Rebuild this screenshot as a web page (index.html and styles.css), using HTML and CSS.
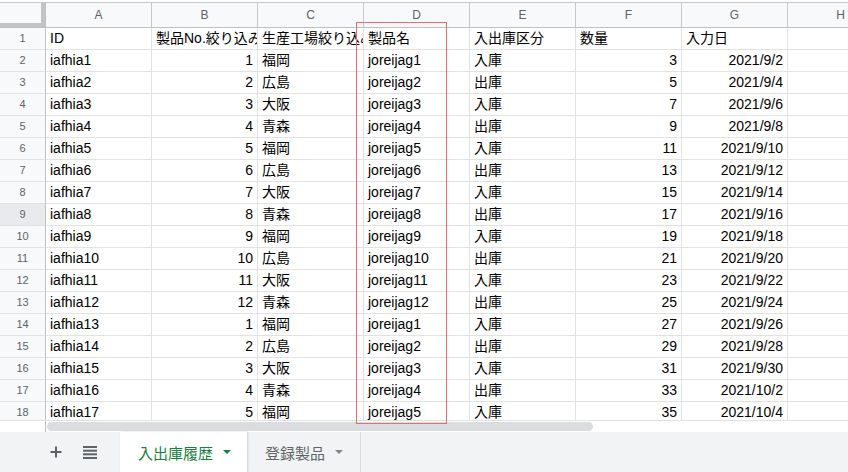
FILE: index.html
```html
<!DOCTYPE html>
<html lang="ja">
<head>
<meta charset="utf-8">
<title>入出庫履歴</title>
<link rel="stylesheet" href="styles.css">
</head>
<body>
<div class="app">
  <div class="sheet">
    <div class="topstrip"></div>
    <div class="colhead">
      <div class="corner"></div>
      <div class="ch">A</div><div class="ch">B</div><div class="ch">C</div><div class="ch">D</div>
      <div class="ch">E</div><div class="ch">F</div><div class="ch">G</div><div class="ch">H</div>
    </div>
    <div class="row"><div class="rh">1</div><div class="c">ID</div><div class="c">製品No.絞り込み</div><div class="c">生産工場絞り込み</div><div class="c">製品名</div><div class="c">入出庫区分</div><div class="c">数量</div><div class="c">入力日</div><div class="c"></div></div>
    <div class="row"><div class="rh">2</div><div class="c">iafhia1</div><div class="c n">1</div><div class="c">福岡</div><div class="c">joreijag1</div><div class="c">入庫</div><div class="c n">3</div><div class="c n">2021/9/2</div><div class="c"></div></div>
    <div class="row"><div class="rh">3</div><div class="c">iafhia2</div><div class="c n">2</div><div class="c">広島</div><div class="c">joreijag2</div><div class="c">出庫</div><div class="c n">5</div><div class="c n">2021/9/4</div><div class="c"></div></div>
    <div class="row"><div class="rh">4</div><div class="c">iafhia3</div><div class="c n">3</div><div class="c">大阪</div><div class="c">joreijag3</div><div class="c">入庫</div><div class="c n">7</div><div class="c n">2021/9/6</div><div class="c"></div></div>
    <div class="row"><div class="rh">5</div><div class="c">iafhia4</div><div class="c n">4</div><div class="c">青森</div><div class="c">joreijag4</div><div class="c">出庫</div><div class="c n">9</div><div class="c n">2021/9/8</div><div class="c"></div></div>
    <div class="row"><div class="rh">6</div><div class="c">iafhia5</div><div class="c n">5</div><div class="c">福岡</div><div class="c">joreijag5</div><div class="c">入庫</div><div class="c n">11</div><div class="c n">2021/9/10</div><div class="c"></div></div>
    <div class="row"><div class="rh">7</div><div class="c">iafhia6</div><div class="c n">6</div><div class="c">広島</div><div class="c">joreijag6</div><div class="c">出庫</div><div class="c n">13</div><div class="c n">2021/9/12</div><div class="c"></div></div>
    <div class="row"><div class="rh">8</div><div class="c">iafhia7</div><div class="c n">7</div><div class="c">大阪</div><div class="c">joreijag7</div><div class="c">入庫</div><div class="c n">15</div><div class="c n">2021/9/14</div><div class="c"></div></div>
    <div class="row"><div class="rh hover">9</div><div class="c">iafhia8</div><div class="c n">8</div><div class="c">青森</div><div class="c">joreijag8</div><div class="c">出庫</div><div class="c n">17</div><div class="c n">2021/9/16</div><div class="c"></div></div>
    <div class="row"><div class="rh">10</div><div class="c">iafhia9</div><div class="c n">9</div><div class="c">福岡</div><div class="c">joreijag9</div><div class="c">入庫</div><div class="c n">19</div><div class="c n">2021/9/18</div><div class="c"></div></div>
    <div class="row"><div class="rh">11</div><div class="c">iafhia10</div><div class="c n">10</div><div class="c">広島</div><div class="c">joreijag10</div><div class="c">出庫</div><div class="c n">21</div><div class="c n">2021/9/20</div><div class="c"></div></div>
    <div class="row"><div class="rh">12</div><div class="c">iafhia11</div><div class="c n">11</div><div class="c">大阪</div><div class="c">joreijag11</div><div class="c">入庫</div><div class="c n">23</div><div class="c n">2021/9/22</div><div class="c"></div></div>
    <div class="row"><div class="rh">13</div><div class="c">iafhia12</div><div class="c n">12</div><div class="c">青森</div><div class="c">joreijag12</div><div class="c">出庫</div><div class="c n">25</div><div class="c n">2021/9/24</div><div class="c"></div></div>
    <div class="row"><div class="rh">14</div><div class="c">iafhia13</div><div class="c n">1</div><div class="c">福岡</div><div class="c">joreijag1</div><div class="c">入庫</div><div class="c n">27</div><div class="c n">2021/9/26</div><div class="c"></div></div>
    <div class="row"><div class="rh">15</div><div class="c">iafhia14</div><div class="c n">2</div><div class="c">広島</div><div class="c">joreijag2</div><div class="c">出庫</div><div class="c n">29</div><div class="c n">2021/9/28</div><div class="c"></div></div>
    <div class="row"><div class="rh">16</div><div class="c">iafhia15</div><div class="c n">3</div><div class="c">大阪</div><div class="c">joreijag3</div><div class="c">入庫</div><div class="c n">31</div><div class="c n">2021/9/30</div><div class="c"></div></div>
    <div class="row"><div class="rh">17</div><div class="c">iafhia16</div><div class="c n">4</div><div class="c">青森</div><div class="c">joreijag4</div><div class="c">出庫</div><div class="c n">33</div><div class="c n">2021/10/2</div><div class="c"></div></div>
    <div class="row"><div class="rh">18</div><div class="c">iafhia17</div><div class="c n">5</div><div class="c">福岡</div><div class="c">joreijag5</div><div class="c">入庫</div><div class="c n">35</div><div class="c n">2021/10/4</div><div class="c"></div></div>
  </div>
  <div class="scroll">
    <div class="scroll-gutter"></div>
    <div class="thumb"></div>
  </div>
  <div class="tabs">
    <div class="tools">
      <svg class="plus" width="12" height="12" viewBox="0 0 12 12"><path d="M6 0.5v11M0.5 6h11" stroke="#5f6368" stroke-width="2" fill="none"/></svg>
      <svg class="menu" width="14" height="13" viewBox="0 0 14 13"><rect x="0" y="0" width="14" height="2" fill="#5f6368"/><rect x="0" y="3.7" width="14" height="2" fill="#5f6368"/><rect x="0" y="7.3" width="14" height="2" fill="#5f6368"/><rect x="0" y="11" width="14" height="2" fill="#5f6368"/></svg>
    </div>
    <div class="tab active"><span class="tab-label">入出庫履歴</span><span class="caret"></span></div>
    <div class="tab"><span class="tab-label">登録製品</span><span class="caret"></span></div>
  </div>
  <div class="selection"></div>
</div>
</body>
</html>
```

FILE: styles.css
```css
html, body {
  margin: 0;
  padding: 0;
  background: #ffffff;
}

.app {
  position: relative;
  width: 848px;
  height: 472px;
  overflow: hidden;
  font-family: "Liberation Sans", Arial, "Noto Sans CJK JP", sans-serif;
  color: #000000;
}

.sheet {
  height: 420px;
  overflow: hidden;
}

.topstrip {
  height: 2px;
  background: #ffffff;
}

.colhead {
  display: flex;
  height: 26px;
  box-sizing: border-box;
  border-top: 1px solid #c7c7c7;
  border-bottom: 1px solid #c0c0c0;
  white-space: nowrap;
}

.corner {
  flex: 0 0 46px;
  box-sizing: border-box;
  background: #f8f9fa;
  border-right: 1px solid #c0c0c0;
  box-shadow: inset -4px -4px 0 #c4c4c4;
}

.ch {
  flex: 0 0 106px;
  box-sizing: border-box;
  background: #f8f9fa;
  border-right: 1px solid #c7c7c7;
  text-align: center;
  font-size: 12px;
  line-height: 24px;
  color: #5f6368;
}

.row {
  display: flex;
  height: 22px;
  white-space: nowrap;
}

.rh {
  flex: 0 0 46px;
  box-sizing: border-box;
  background: #f8f9fa;
  border-right: 1px solid #c0c0c0;
  border-bottom: 1px solid #e2e2e2;
  text-align: center;
  font-size: 11px;
  line-height: 21px;
  color: #5f6368;
}

.rh.hover {
  background: #e8eaed;
}

.c {
  flex: 0 0 106px;
  box-sizing: border-box;
  border-right: 1px solid #e2e2e2;
  border-bottom: 1px solid #e2e2e2;
  padding: 0 4px;
  font-size: 14px;
  line-height: 21px;
  overflow: hidden;
  text-overflow: clip;
}

.c.n {
  text-align: right;
}

.scroll {
  display: flex;
  height: 12px;
  box-sizing: border-box;
  border-top: 1px solid #e0e0e0;
  background: #ffffff;
}

.scroll-gutter {
  flex: 0 0 46px;
  box-sizing: border-box;
  border-right: 1px solid #c0c0c0;
}

.thumb {
  width: 546px;
  height: 9px;
  margin: 1px 0 0 1px;
  border-radius: 5px;
  background: #dadce0;
}

.tabs {
  display: flex;
  height: 40px;
  background: #f1f3f4;
}

.tools {
  flex: 0 0 120px;
  display: flex;
  align-items: center;
}

.plus {
  margin-left: 50px;
}

.menu {
  margin-left: 21px;
}

.tab {
  display: flex;
  align-items: center;
  box-sizing: border-box;
  padding-left: 18px;
  font-family: "Noto Sans CJK JP", "Liberation Sans", sans-serif;
  font-size: 15px;
  color: #5f6368;
  width: 114px;
  border-right: 1px solid #dadce0;
}

.tab.active {
  width: 127px;
  background: #ffffff;
  color: #188038;
  border-right: none;
  box-shadow: 1px 0 2px rgba(60, 64, 67, 0.2);
}

.caret {
  width: 0;
  height: 0;
  margin-left: 10px;
  border-left: 4px solid transparent;
  border-right: 4px solid transparent;
  border-top: 4px solid #80868b;
}

.tab.active .caret {
  margin-left: 10px;
  border-top-color: #188038;
}

.selection {
  position: absolute;
  left: 356px;
  top: 22px;
  width: 91px;
  height: 402px;
  box-sizing: border-box;
  border: 1px solid #ef6b6b;
  pointer-events: none;
}
```
